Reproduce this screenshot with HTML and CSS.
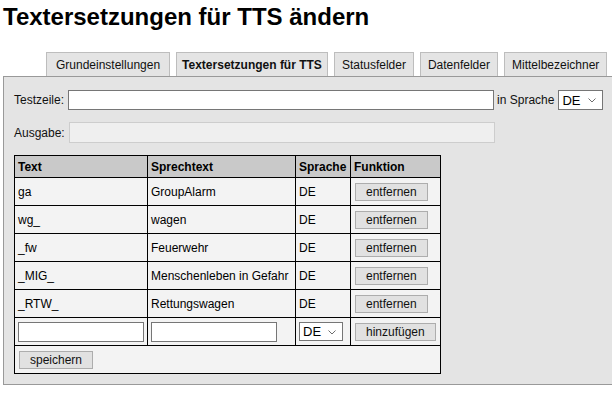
FILE: index.html
```html
<!DOCTYPE html>
<html lang="de">
<head>
<meta charset="utf-8">
<title>Textersetzungen für TTS ändern</title>
<link rel="stylesheet" href="styles.css">
</head>
<body>
<div class="page">
  <h1 class="title">Textersetzungen für TTS ändern</h1>
  <div class="tabs">
    <div class="tab tab-first">Grundeinstellungen</div>
    <div class="tab tab-active">Textersetzungen für TTS</div>
    <div class="tab">Statusfelder</div>
    <div class="tab">Datenfelder</div>
    <div class="tab">Mittelbezeichner</div>
  </div>
  <div class="panel">
    <div class="form-row row-test">
      <span class="label">Testzeile:</span>
      <input class="text-input wide" type="text">
      <span class="label">in Sprache</span>
      <span class="select-wrap sel-top">
        <select class="select"><option>DE</option></select>
        <svg class="chev" width="8" height="5" viewBox="0 0 8 5"><path d="M0.5 0.5 L4 4 L7.5 0.5" fill="none" stroke="#6d6d6d" stroke-width="1"/></svg>
      </span>
    </div>
    <div class="form-row row-out">
      <span class="label">Ausgabe:</span>
      <input class="text-input wide disabled" type="text" disabled>
    </div>
    <table class="grid">
      <colgroup>
        <col class="c1"><col class="c2"><col class="c3"><col class="c4">
      </colgroup>
      <thead>
        <tr><th>Text</th><th>Sprechtext</th><th>Sprache</th><th>Funktion</th></tr>
      </thead>
      <tbody>
        <tr><td>ga</td><td>GroupAlarm</td><td>DE</td><td><button class="btn">entfernen</button></td></tr>
        <tr><td>wg_</td><td>wagen</td><td>DE</td><td><button class="btn">entfernen</button></td></tr>
        <tr><td>_fw</td><td>Feuerwehr</td><td>DE</td><td><button class="btn">entfernen</button></td></tr>
        <tr><td>_MIG_</td><td>Menschenleben in Gefahr</td><td>DE</td><td><button class="btn">entfernen</button></td></tr>
        <tr><td>_RTW_</td><td>Rettungswagen</td><td>DE</td><td><button class="btn">entfernen</button></td></tr>
        <tr>
          <td><input class="text-input cell-input" type="text"></td>
          <td><input class="text-input cell-input" type="text"></td>
          <td>
            <span class="select-wrap sel-cell">
              <select class="select"><option>DE</option></select>
              <svg class="chev" width="8" height="5" viewBox="0 0 8 5"><path d="M0.5 0.5 L4 4 L7.5 0.5" fill="none" stroke="#6d6d6d" stroke-width="1"/></svg>
            </span>
          </td>
          <td><button class="btn">hinzufügen</button></td>
        </tr>
        <tr><td colspan="4"><button class="btn">speichern</button></td></tr>
      </tbody>
    </table>
  </div>
</div>
</body>
</html>
```
FILE: styles.css
```css
html, body {
  margin: 0;
  padding: 0;
  background: #fff;
  overflow: hidden;
}
body {
  font-family: "Liberation Sans", Arial, sans-serif;
  font-size: 12px;
  color: #000;
}
.page {
  padding-left: 3px;
}
.title {
  margin: 0;
  padding-top: 3px;
  font-size: 24px;
  line-height: 28px;
  font-weight: bold;
}
.tabs {
  display: flex;
  gap: 6px;
  margin-top: 21px;
  padding-left: 43px;
}
.tab {
  height: 21px;
  padding: 2px 7px 0;
  line-height: 21px;
  background: #e4e4e4;
  border: 1px solid #bdbdbd;
  border-bottom: 0;
  color: #111;
  white-space: nowrap;
}
.tab-first {
  padding: 2px 9px 0;
}
.tab-active {
  font-weight: bold;
  padding: 2px 5px 0;
}
.panel {
  background: #e4e4e4;
  border: 1px solid #999;
  border-right: 0;
  padding: 13px 0 10px 10px;
}
.form-row {
  display: flex;
  align-items: center;
  gap: 4px;
}
.row-test {
  gap: 3px;
}
.row-test .wide {
  margin-left: 1px;
}
.row-out {
  margin-top: 12px;
}
.label {
  color: #111;
  white-space: nowrap;
}
.text-input {
  box-sizing: border-box;
  margin: 0;
  padding: 0 2px;
  background: #fff;
  border: 1px solid #767676;
  font: inherit;
}
.wide {
  width: 426px;
  height: 20px;
}
.row-out .wide {
  height: 21px;
}
.disabled {
  background: #efefef;
  border-color: #cdcdcd;
}
.select-wrap {
  position: relative;
  display: inline-block;
}
.sel-top {
  margin-left: 1px;
}
.select {
  box-sizing: border-box;
  appearance: none;
  -webkit-appearance: none;
  margin: 0;
  padding: 0 0 0 3px;
  background: #fff;
  border: 1px solid #767676;
  border-radius: 0;
  font: inherit;
  font-size: 13px;
  color: #000;
  display: block;
}
.sel-top .select {
  width: 45px;
  height: 20px;
}
.sel-cell .select {
  width: 44px;
  height: 19px;
}
.chev {
  position: absolute;
  right: 7px;
  top: 50%;
  margin-top: -2px;
  pointer-events: none;
}
.grid {
  margin-top: 12px;
  border-collapse: collapse;
  table-layout: fixed;
  width: 426px;
  background: #f3f3f3;
}
.c1 { width: 133px; }
.c2 { width: 148px; }
.c3 { width: 55px; }
.c4 { width: 90px; }
.grid th, .grid td {
  border: 1px solid #000;
  padding: 0 3px;
  text-align: left;
  vertical-align: middle;
  white-space: nowrap;
  overflow: hidden;
}
.grid th {
  height: 21px;
  background: #c9c9c9;
  font-weight: bold;
}
.grid td {
  height: 27px;
}
.cell-input {
  width: 126px;
  height: 20px;
  display: block;
}
.btn {
  box-sizing: border-box;
  height: 18px;
  margin: 0 0 0 1px;
  padding: 0 10px;
  background: #e1e1e1;
  border: 1px solid #adadad;
  border-radius: 0;
  font: inherit;
  color: #111;
  line-height: 16px;
}
```
